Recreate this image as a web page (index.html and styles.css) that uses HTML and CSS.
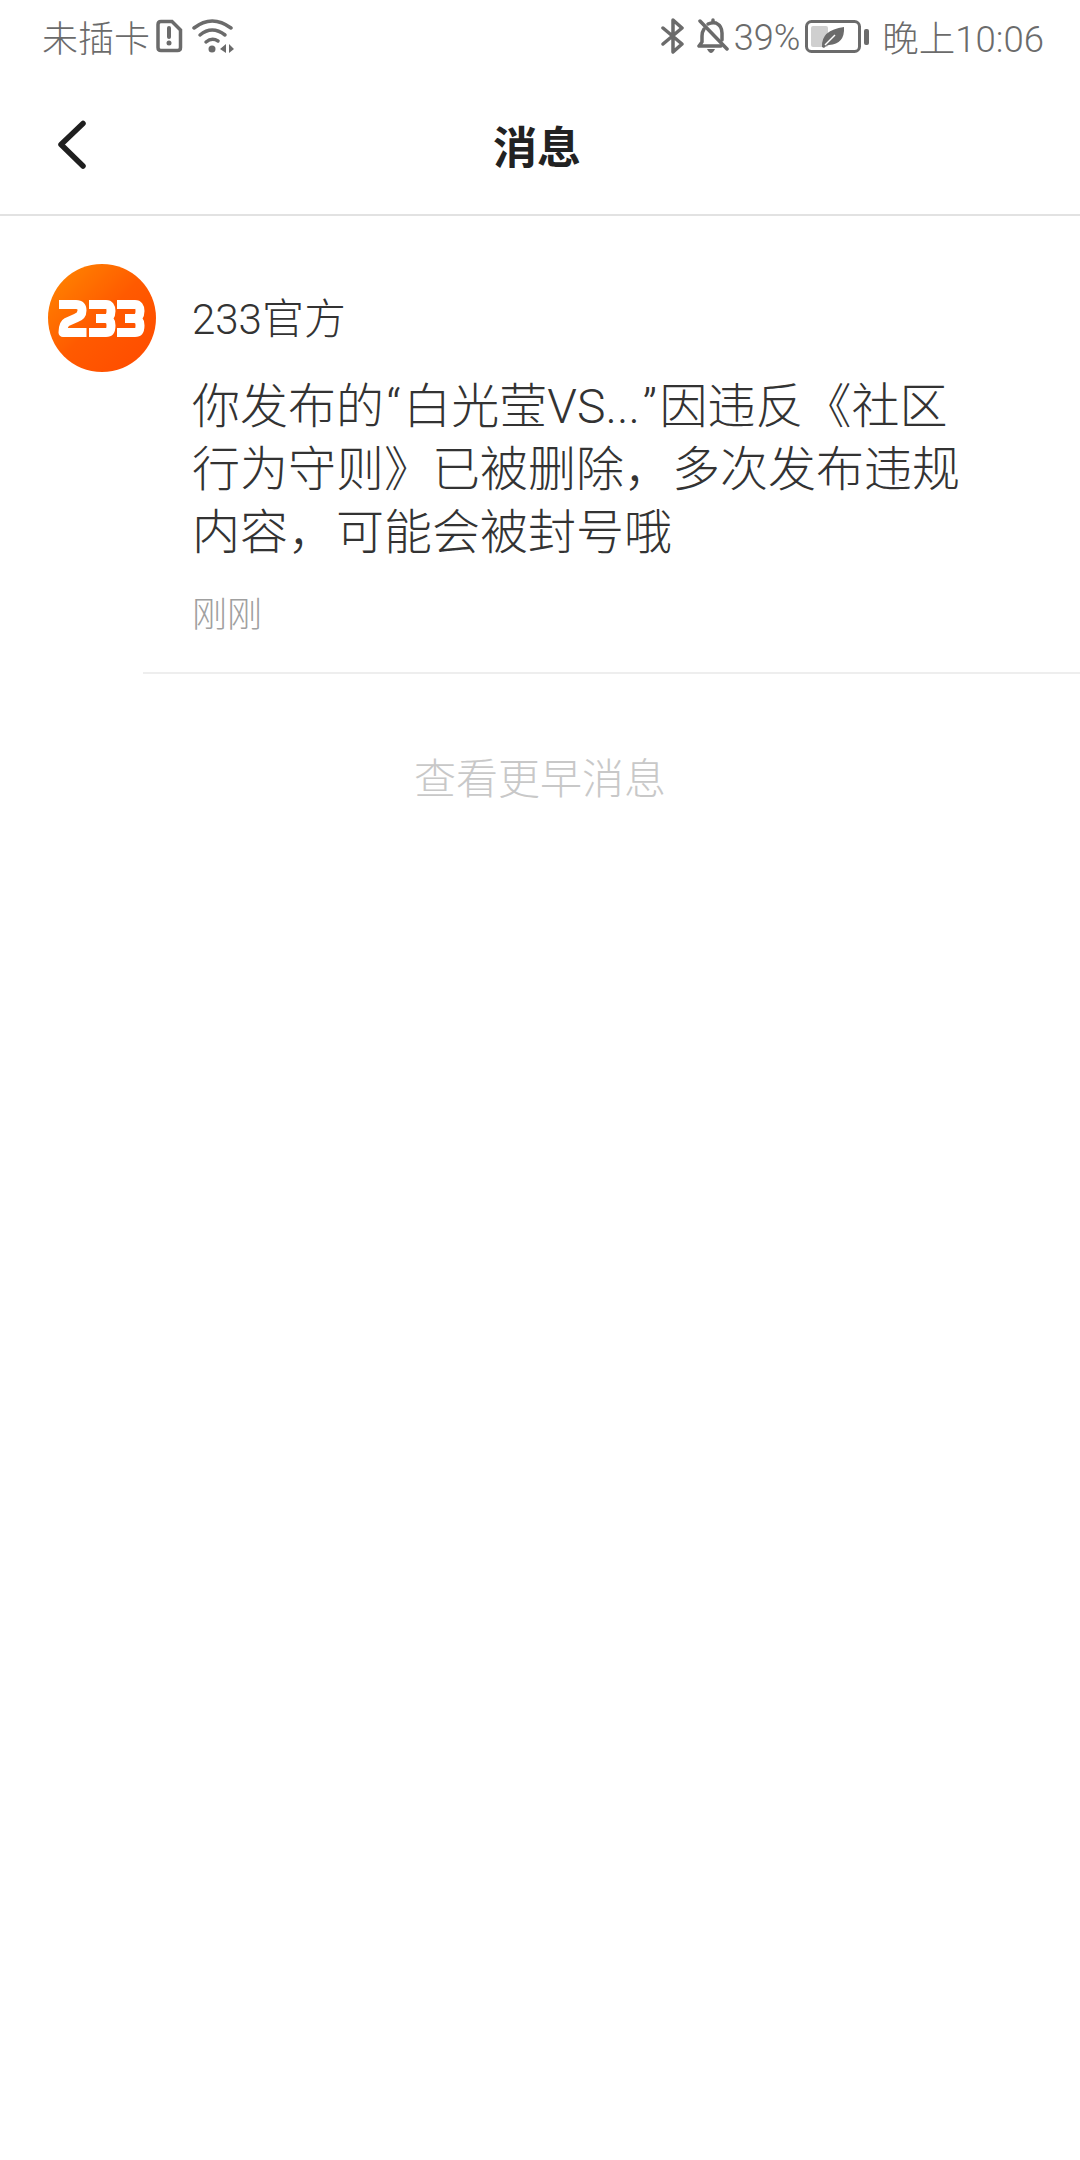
FILE: index.html
```html
<!DOCTYPE html>
<html lang="zh-CN">
<head>
    <meta charset="utf-8" />
    <meta name="viewport" content="width=device-width, initial-scale=1" />
    <title>消息</title>
    <link rel="stylesheet" href="styles.css">
</head>
<body>
    <div class="status-bar">
        <div class="status-left">
            <span>未插卡</span>
            <svg class="icon-sim" width="27" height="34" viewBox="0 0 27 34">
                <path d="M5 2.500H16L24.500 11V28.500Q24.500 31.500 21.500 31.500H5Q2 31.500 2 28.500V5.500Q2 2.500 5 2.500Z" fill="none" stroke="#6b6b6b" stroke-width="3.500"/>
                <path d="M13 9V18" stroke="#6b6b6b" stroke-width="4" stroke-linecap="round"/>
                <circle cx="13" cy="24" r="2.500" fill="#6b6b6b"/>
            </svg>
            <svg class="icon-wifi" width="42" height="36" viewBox="0 0 42 36">
                <g fill="none" stroke="#6b6b6b" stroke-width="3.500" stroke-linecap="round">
                    <path d="M2 10Q20 -4 39 10"/>
                    <path d="M8 17Q20 7 33 17"/>
                    <path d="M14 24Q20 19 26 23"/>
                </g>
                <circle cx="20" cy="31" r="3.500" fill="#6b6b6b"/>
                <path d="M34 26V35L28 31ZM37 26V35L42 31Z" fill="#6b6b6b"/>
            </svg>
        </div>
        <div class="status-right">
            <svg class="icon-bt" width="24" height="38" viewBox="0 0 24 38">
                <path d="M2 11L21 27L12 35V3L21 11L2 27" fill="none" stroke="#6b6b6b" stroke-width="3.500" stroke-linejoin="round" stroke-linecap="round"/>
            </svg>
            <svg class="icon-bell" width="32" height="36" viewBox="0 0 32 36">
                <g fill="none" stroke="#6b6b6b" stroke-width="3.500" stroke-linecap="round" stroke-linejoin="round">
                    <path d="M7 11Q5 14 5 18V24L2 28H24"/>
                    <path d="M11 6Q15 4 19 5Q25 8 25 15V22"/>
                    <path d="M3 3L30 31"/>
                    <path d="M16 2V4"/>
                </g>
                <path d="M10 31H18Q16 35 14 35Q12 35 10 31Z" fill="#6b6b6b"/>
            </svg>
            <span class="battery-pct">39%</span>
            <svg class="icon-battery" width="65" height="33" viewBox="0 0 65 33">
                <rect x="1.500" y="1.500" width="53" height="30" rx="5" fill="none" stroke="#6b6b6b" stroke-width="3"/>
                <rect x="6" y="6" width="17" height="21" rx="2" fill="#cfcfcf"/>
                <path d="M17 27Q16 10 39 7Q40 24 24 25Q21 25 19 28Z" fill="#6b6b6b"/>
                <path d="M20 25L30 15" stroke="#fff" stroke-width="1.500"/>
                <rect x="59" y="9" width="5" height="16" rx="2" fill="#6b6b6b"/>
            </svg>
            <span class="clock">晚上10:06</span>
        </div>
    </div>

    <div class="title-bar">
        <svg class="back" width="32" height="50" viewBox="0 0 32 50">
            <path d="M27 3.500L5 24.500L27 46" fill="none" stroke="#1f1f1f" stroke-width="5.500" stroke-linecap="round" stroke-linejoin="round"/>
        </svg>
        <h1 class="title">消息</h1>
    </div>

    <div class="message">
        <svg class="avatar" width="108" height="108" viewBox="0 0 108 108">
            <defs>
                <linearGradient id="avatarFill" x1="0" y1="0" x2="1" y2="1">
                    <stop offset="0" stop-color="#ff8a00"/>
                    <stop offset="0.500" stop-color="#ff5a00"/>
                    <stop offset="1" stop-color="#ff4a00"/>
                </linearGradient>
            </defs>
            <circle cx="54" cy="54" r="54" fill="url(#avatarFill)"/>
            <g fill="none" stroke="#fff" stroke-width="9" stroke-linejoin="round">
                <path d="M11 40.500H28Q34 40.500 34 46.500Q34 52 28 54L19 58Q15 60 15 68.500H38.500"/>
                <path d="M41 40.500H58Q63 40.500 63 47Q63 54.500 57 54.500H48M57 54.500Q63 54.500 63 61.500Q63 68.500 58 68.500H41"/>
                <path d="M69 40.500H87Q92 40.500 92 47Q92 54.500 86 54.500H77M86 54.500Q92 54.500 92 61.500Q92 68.500 87 68.500H69"/>
            </g>
        </svg>
        <div class="message-body">
            <div class="sender">233官方</div>
            <p class="content">你发布的<span class="quote">“</span>白光莹VS...<span class="quote">”</span>因违反《社区<br>行为守则》已被删除，多次发布违规<br>内容，可能会被封号哦</p>
            <div class="time">刚刚</div>
        </div>
    </div>

    <div class="more">查看更早消息</div>
</body>
</html>
```

FILE: styles.css
```css
body {
    margin: 0;
    height: 2160px;
    background-color: #fff;
    font-family: "Roboto", "Noto Sans CJK SC", sans-serif;
    font-weight: 300;
    overflow: hidden;
}

.status-bar {
    display: flex;
    justify-content: space-between;
    align-items: center;
    height: 72px;
    padding: 0 36px 4px 42px;
    color: #6b6b6b;
    font-size: 36px;
}

.status-left,
.status-right {
    display: flex;
    align-items: center;
}

.icon-sim {
    margin-left: 6px;
}

.icon-wifi {
    margin-left: 9px;
}

.icon-bell {
    margin-left: 12px;
}

.battery-pct {
    margin: 4px 0 0 5px;
}

.icon-battery {
    margin-left: 5px;
}

.clock {
    margin-left: 12px;
    font-size: 36.500px;
}

.title-bar {
    position: relative;
    display: flex;
    justify-content: center;
    align-items: center;
    height: 138px;
    padding-right: 6px;
    border-bottom: 2px solid #e2e2e2;
}

.back {
    position: absolute;
    left: 56px;
    top: 44px;
}

.title {
    margin: 0;
    font-size: 44px;
    font-weight: 700;
    color: #222;
}

.message {
    display: flex;
    align-items: flex-start;
    padding: 48px 0 0 48px;
}

.avatar {
    flex: none;
}

.message-body {
    flex: 1;
    margin-left: -13px;
    padding: 0 0 31px 49px;
    border-bottom: 2px solid #eeeeee;
    color: #333;
}

.sender {
    margin-top: 30px;
    font-size: 42px;
    line-height: 52px;
}

.content {
    margin: 29px 0 0;
    font-size: 48px;
    line-height: 63px;
}

.quote {
    padding: 0 2.500px;
}

.time {
    margin-top: 27px;
    font-size: 35px;
    line-height: 50px;
    color: #a0a0a0;
}

.more {
    margin-top: 76px;
    text-align: center;
    font-size: 42px;
    line-height: 60px;
    color: #c8c8c8;
}
```
